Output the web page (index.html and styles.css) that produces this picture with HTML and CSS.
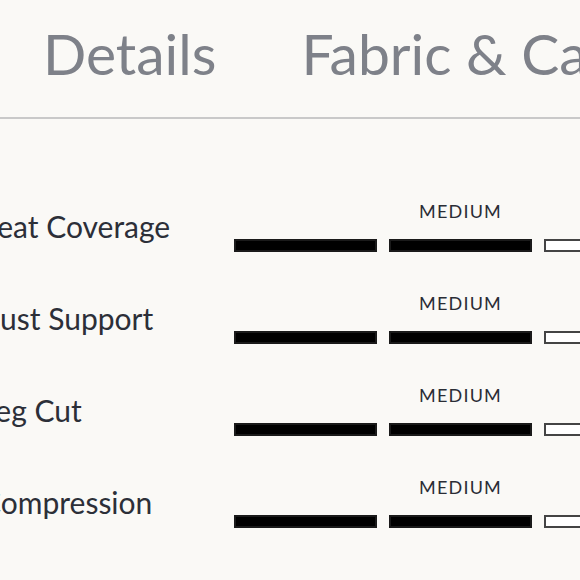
FILE: index.html
```html
<!DOCTYPE html>
<html lang="en">
<head>
<meta charset="utf-8">
<title>Details</title>
<link rel="stylesheet" href="styles.css">
</head>
<body>
<div class="page">
  <nav class="tabs">
    <span class="tab">Details</span>
    <span class="tab">Fabric &amp; Care</span>
  </nav>
  <section class="rows">
    <div class="row">
      <div class="label">Seat Coverage</div>
      <div class="scale">
        <div class="level">MEDIUM</div>
        <div class="bar on"></div><div class="bar on"></div><div class="bar"></div><div class="bar"></div><div class="bar"></div>
      </div>
    </div>
    <div class="row">
      <div class="label">Bust Support</div>
      <div class="scale">
        <div class="level">MEDIUM</div>
        <div class="bar on"></div><div class="bar on"></div><div class="bar"></div><div class="bar"></div><div class="bar"></div>
      </div>
    </div>
    <div class="row">
      <div class="label">Leg Cut</div>
      <div class="scale">
        <div class="level">MEDIUM</div>
        <div class="bar on"></div><div class="bar on"></div><div class="bar"></div><div class="bar"></div><div class="bar"></div>
      </div>
    </div>
    <div class="row">
      <div class="label">Compression</div>
      <div class="scale">
        <div class="level">MEDIUM</div>
        <div class="bar on"></div><div class="bar on"></div><div class="bar"></div><div class="bar"></div><div class="bar"></div>
      </div>
    </div>
  </section>
</div>
</body>
</html>
```

FILE: styles.css
```css
html, body {
  margin: 0;
  padding: 0;
  background: #faf9f6;
  overflow: hidden;
}
.page {
  width: 580px;
  height: 580px;
  overflow: hidden;
  font-family: Lato, "Liberation Sans", sans-serif;
}
.tabs {
  display: flex;
  gap: 85px;
  padding: 18px 0 29px 43px;
  border-bottom: 2px solid #c9c9c9;
  white-space: nowrap;
}
.tab {
  font-size: 57px;
  line-height: 70px;
  color: #7e8189;
  flex-shrink: 0;
}
.rows {
  padding-top: 61px;
  margin-left: -19px;
}
.row {
  display: flex;
  align-items: center;
  height: 92px;
}
.label {
  width: 253px;
  flex-shrink: 0;
  font-size: 30px;
  line-height: 36px;
  color: #2c2f38;
  white-space: nowrap;
}
.scale {
  display: grid;
  grid-template-columns: repeat(5, 143px);
  column-gap: 12px;
  row-gap: 17px;
  flex-shrink: 0;
}
.level {
  grid-column: 2;
  grid-row: 1;
  text-align: center;
  font-size: 18px;
  line-height: 22px;
  letter-spacing: 1.2px;
  color: #2a2d35;
}
.bar {
  grid-row: 2;
  height: 13px;
  box-sizing: border-box;
  background: #ffffff;
  border: 2px solid #444444;
}
.bar.on {
  background: #000000;
  border-color: #1a1a1a;
}
```
